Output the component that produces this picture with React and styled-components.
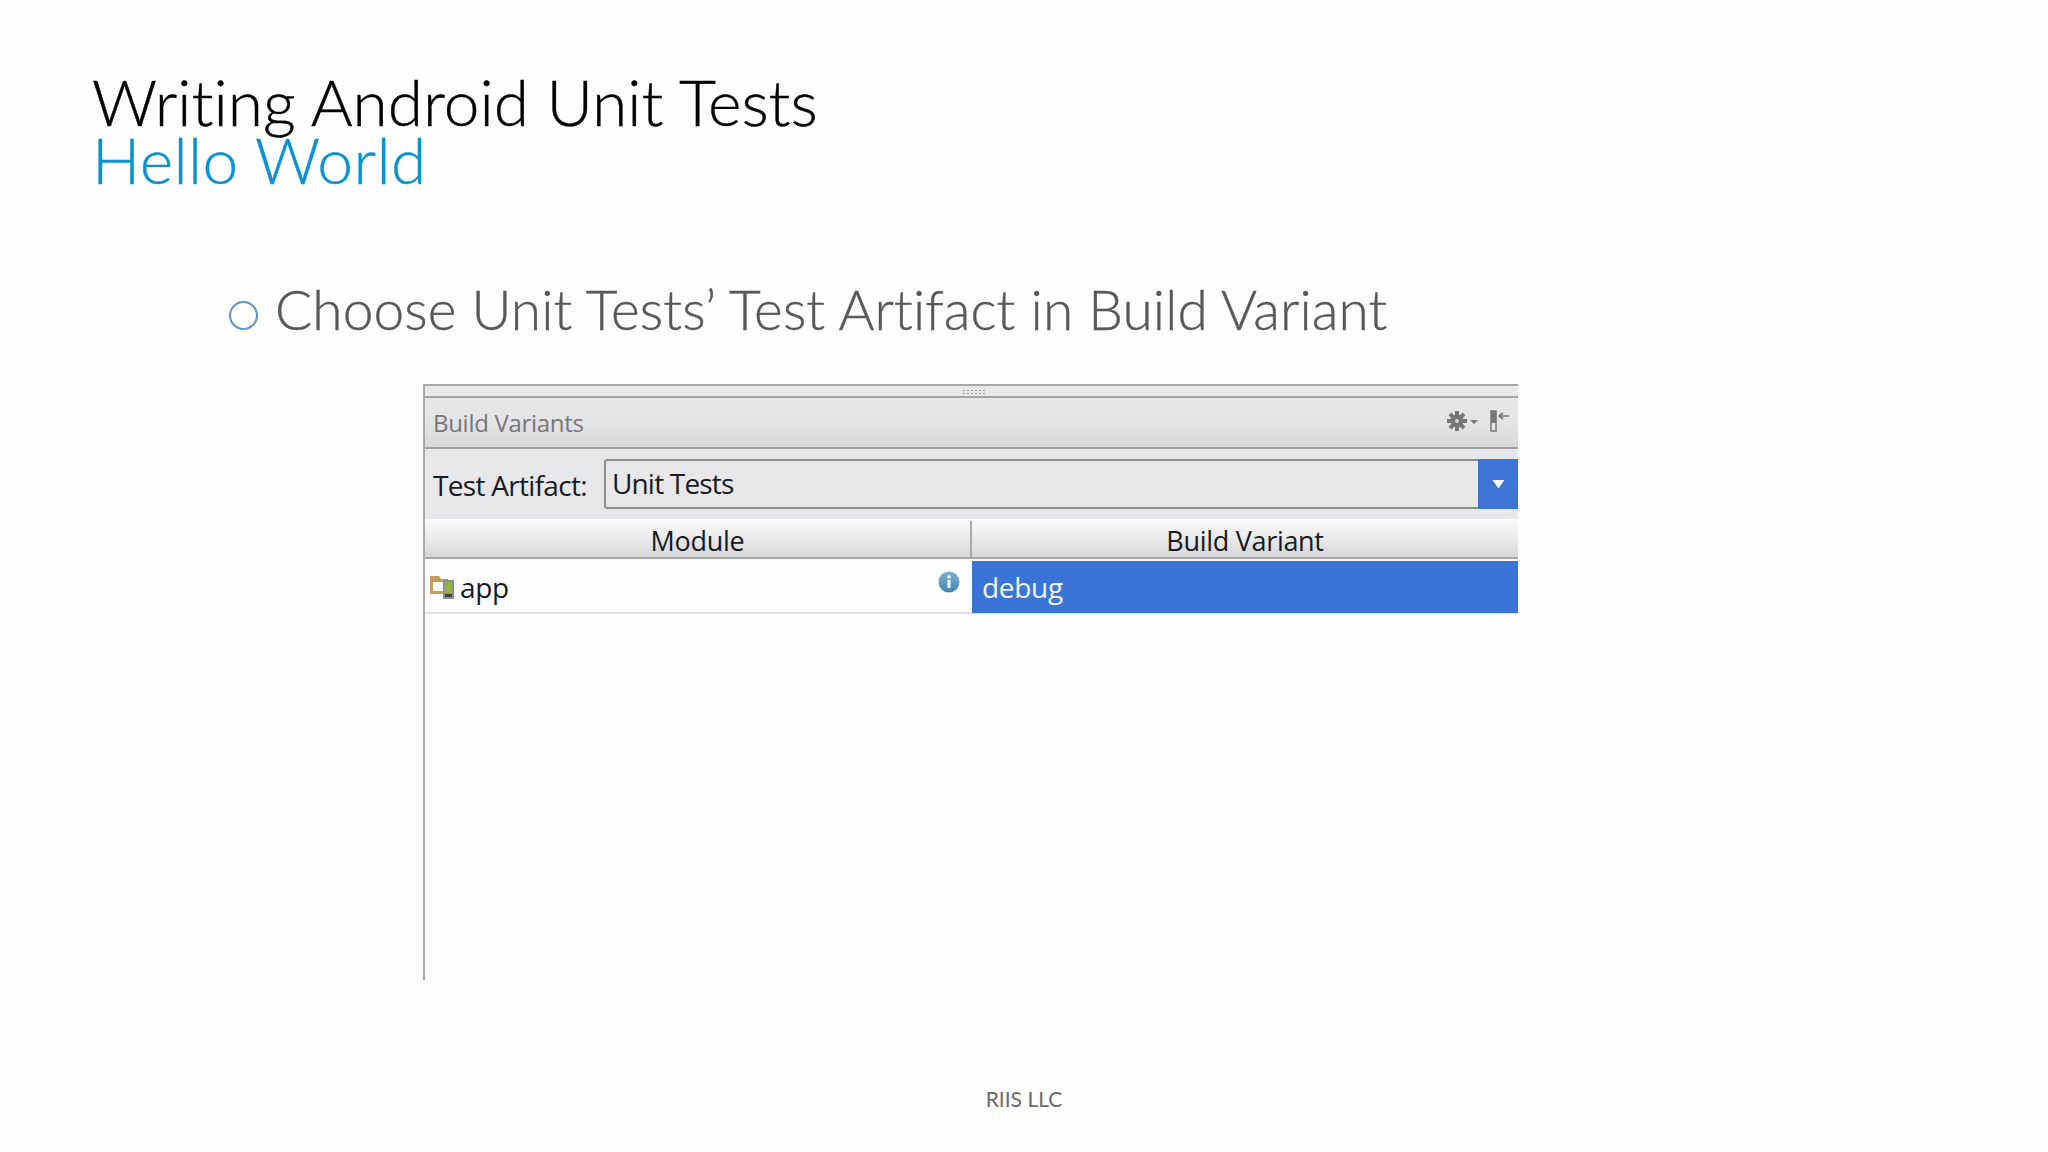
import React from 'react'
import styled, { createGlobalStyle } from 'styled-components'

const GlobalStyle = createGlobalStyle`
  html, body { margin: 0; padding: 0; background: #fff; }
`

const Slide = styled.div`
  width: 2048px;
  height: 1152px;
  overflow: hidden;
  display: flex;
  flex-direction: column;
  background: #fefefe;
`

const Heading = styled.div`
  padding: 73px 0 0 92px;
  font-family: Lato, sans-serif;
  font-weight: 300;
  font-size: 64px;
  line-height: 58px;
  font-variant-ligatures: none;
`

const TitleLine = styled.div`
  color: ${p => p.$color};
  white-space: nowrap;
  letter-spacing: ${p => p.$spacing || 0}px;
  -webkit-text-stroke: 0.4px ${p => p.$color};
`

const Bullet = styled.div`
  display: flex;
  align-items: center;
  gap: 17px;
  margin: 89px 0 0 229px;
  height: 62px;
  font-family: Lato, sans-serif;
  font-weight: 300;
  font-size: 55px;
  letter-spacing: 0.1px;
  font-variant-ligatures: none;
  color: #58585a;
  -webkit-text-stroke: 0.4px #58585a;
  white-space: nowrap;
`

const Ring = styled.span`
  width: 25px;
  height: 25px;
  margin-top: 12px;
  border: 2px solid #5b94cf;
  border-radius: 50%;
  flex: none;
`

const Panel = styled.div`
  margin: 44px 0 0 423px;
  width: 1095px;
  height: 596px;
  box-sizing: border-box;
  border-left: 2px solid #a9a9a9;
  border-top: 2px solid #a9a9a9;
  font-family: "Open Sans", sans-serif;
  color: #161a22;
`

const DragStrip = styled.div`
  height: 10px;
  border-bottom: 2px solid #a4a4a4;
  background: #e9e8ea;
  display: flex;
  justify-content: center;
  align-items: center;
  padding-left: 4px;
`

const Grip = styled.span`
  width: 24px;
  height: 5px;
  background-image: radial-gradient(circle, #9a9a9a 0.8px, transparent 1px);
  background-size: 4px 3px;
`

const PanelHeader = styled.div`
  height: 49px;
  display: flex;
  align-items: center;
  justify-content: space-between;
  padding: 0 8px;
  background: linear-gradient(#e8e7e9, #e4e3e5 50%, #d9d8da);
  border-bottom: 2px solid #a0a0a0;
  font-size: 24px;
  letter-spacing: -0.3px;
  color: #777779;
`

const HeaderIcons = styled.div`
  display: flex;
  align-items: center;
  gap: 11px;
  margin-top: -3px;
`

const Toolbar = styled.div`
  height: 70px;
  display: flex;
  align-items: center;
  gap: 17px;
  padding-left: 8px;
  background: #e8e7e9;
  font-size: 28px;
  letter-spacing: -0.7px;
`

const ToolLabel = styled.span`
  white-space: nowrap;
  margin-top: 2px;
`

const Combo = styled.div`
  flex: 1;
  height: 50px;
  display: flex;
  align-items: stretch;
  box-sizing: border-box;
  border: 2px solid #8f8f8f;
  border-right: none;
  border-radius: 3px 0 0 3px;
  background: #e8e7e9;
`

const ComboValue = styled.span`
  flex: 1;
  padding-left: 6px;
  line-height: 44px;
  letter-spacing: -0.8px;
`

const ComboArrow = styled.span`
  width: 40px;
  margin: -2px 0;
  display: flex;
  align-items: center;
  justify-content: center;
  background: #3c75d6;
`

const TableHeader = styled.div`
  height: 38px;
  display: grid;
  grid-template-columns: 545px 1fr;
  background: linear-gradient(#fbfafb, #f0eff0 40%, #d6d5d7);
  border-bottom: 2px solid #a8a8a8;
  font-size: 27px;
  letter-spacing: -0.3px;
`

const HeaderCell = styled.div`
  text-align: center;
  line-height: 40px;
  height: 36px;
  margin-top: 2px;
  & + & { border-left: 2px solid #a9a9a9; }
`

const Row = styled.div`
  margin-top: 2px;
  height: 53px;
  display: grid;
  grid-template-columns: 547px 1fr;
  border-bottom: 2px solid #dfe0e4;
  box-sizing: border-box;
  font-size: 28px;
  letter-spacing: -0.3px;
`

const ModuleCell = styled.div`
  display: flex;
  align-items: center;
  gap: 5px;
  padding-left: 4px;
  position: relative;
`

const InfoBadge = styled.svg`
  position: absolute;
  right: 12px;
  top: 10px;
`

const VariantCell = styled.div`
  background: #3a74d7;
  color: #f2f5fb;
  padding-left: 10px;
  line-height: 52px;
`

const Footer = styled.div`
  margin-top: 106px;
  text-align: center;
  font-family: Lato, sans-serif;
  font-size: 21px;
  color: #6a6a6a;
`

const GearIcon = () => (
  <svg width="32" height="24" viewBox="0 0 32 24">
    <g fill="#777779">
      <circle cx="10" cy="12" r="6.5" />
      <rect x="8" y="2" width="4" height="20" />
      <rect x="0" y="10" width="20" height="4" />
      <rect x="8" y="2" width="4" height="20" transform="rotate(45 10 12)" />
      <rect x="8" y="2" width="4" height="20" transform="rotate(-45 10 12)" />
      <path d="M23 11h8l-4 4z" />
    </g>
    <circle cx="10" cy="12" r="2" fill="#d8d7d9" />
  </svg>
)

const PinIcon = () => (
  <svg width="20" height="24" viewBox="0 0 20 24">
    <rect x="1" y="2" width="5" height="20" fill="#e8e8e8" stroke="#777779" strokeWidth="1.5" />
    <rect x="1" y="2" width="5" height="12" fill="#777779" />
    <path d="M9 7h10M9 7l4-3M9 7l4 3" fill="none" stroke="#777779" strokeWidth="1.6" />
  </svg>
)

const ArrowIcon = () => (
  <svg width="13" height="10" viewBox="0 0 13 10">
    <path d="M0.5 1h12L6.5 9.5z" fill="#f4f7fc" />
  </svg>
)

const ModuleIcon = () => (
  <svg width="26" height="26" viewBox="0 0 26 26">
    <path d="M1 2h9l2 3h7v15H1z" fill="#c69c62" />
    <rect x="4" y="8" width="13" height="9" fill="#fffdf8" />
    <rect x="14" y="6" width="11" height="19" rx="1" fill="#8d8d8d" />
    <rect x="16" y="8" width="7" height="11" fill="#90b43c" />
    <rect x="16" y="20" width="7" height="3" fill="#444" />
  </svg>
)

const InfoIcon = () => (
  <InfoBadge width="22" height="22" viewBox="0 0 22 22">
    <defs>
      <linearGradient id="infoFill" x1="0" y1="0" x2="0" y2="1">
        <stop offset="0" stopColor="#7fb0cf" />
        <stop offset="1" stopColor="#3f86bd" />
      </linearGradient>
    </defs>
    <circle cx="11" cy="11" r="10.5" fill="url(#infoFill)" />
    <rect x="9.4" y="9" width="3.2" height="8" fill="#f2f8fc" />
    <rect x="9.4" y="4.5" width="3.2" height="3" fill="#f2f8fc" />
  </InfoBadge>
)

export default function App() {
  return (
    <Slide>
      <GlobalStyle />
      <Heading>
        <TitleLine $color="#000">Writing Android Unit Tests</TitleLine>
        <TitleLine $color="#0a93d2" $spacing={0.4}>Hello World</TitleLine>
      </Heading>
      <Bullet>
        <Ring />
        <span>Choose Unit Tests’ Test Artifact in Build Variant</span>
      </Bullet>
      <Panel>
        <DragStrip><Grip /></DragStrip>
        <PanelHeader>
          <span>Build Variants</span>
          <HeaderIcons>
            <GearIcon />
            <PinIcon />
          </HeaderIcons>
        </PanelHeader>
        <Toolbar>
          <ToolLabel>Test Artifact:</ToolLabel>
          <Combo>
            <ComboValue>Unit Tests</ComboValue>
            <ComboArrow><ArrowIcon /></ComboArrow>
          </Combo>
        </Toolbar>
        <TableHeader>
          <HeaderCell>Module</HeaderCell>
          <HeaderCell>Build Variant</HeaderCell>
        </TableHeader>
        <Row>
          <ModuleCell>
            <ModuleIcon />
            <span>app</span>
            <InfoIcon />
          </ModuleCell>
          <VariantCell>debug</VariantCell>
        </Row>
      </Panel>
      <Footer>RIIS LLC</Footer>
    </Slide>
  )
}
